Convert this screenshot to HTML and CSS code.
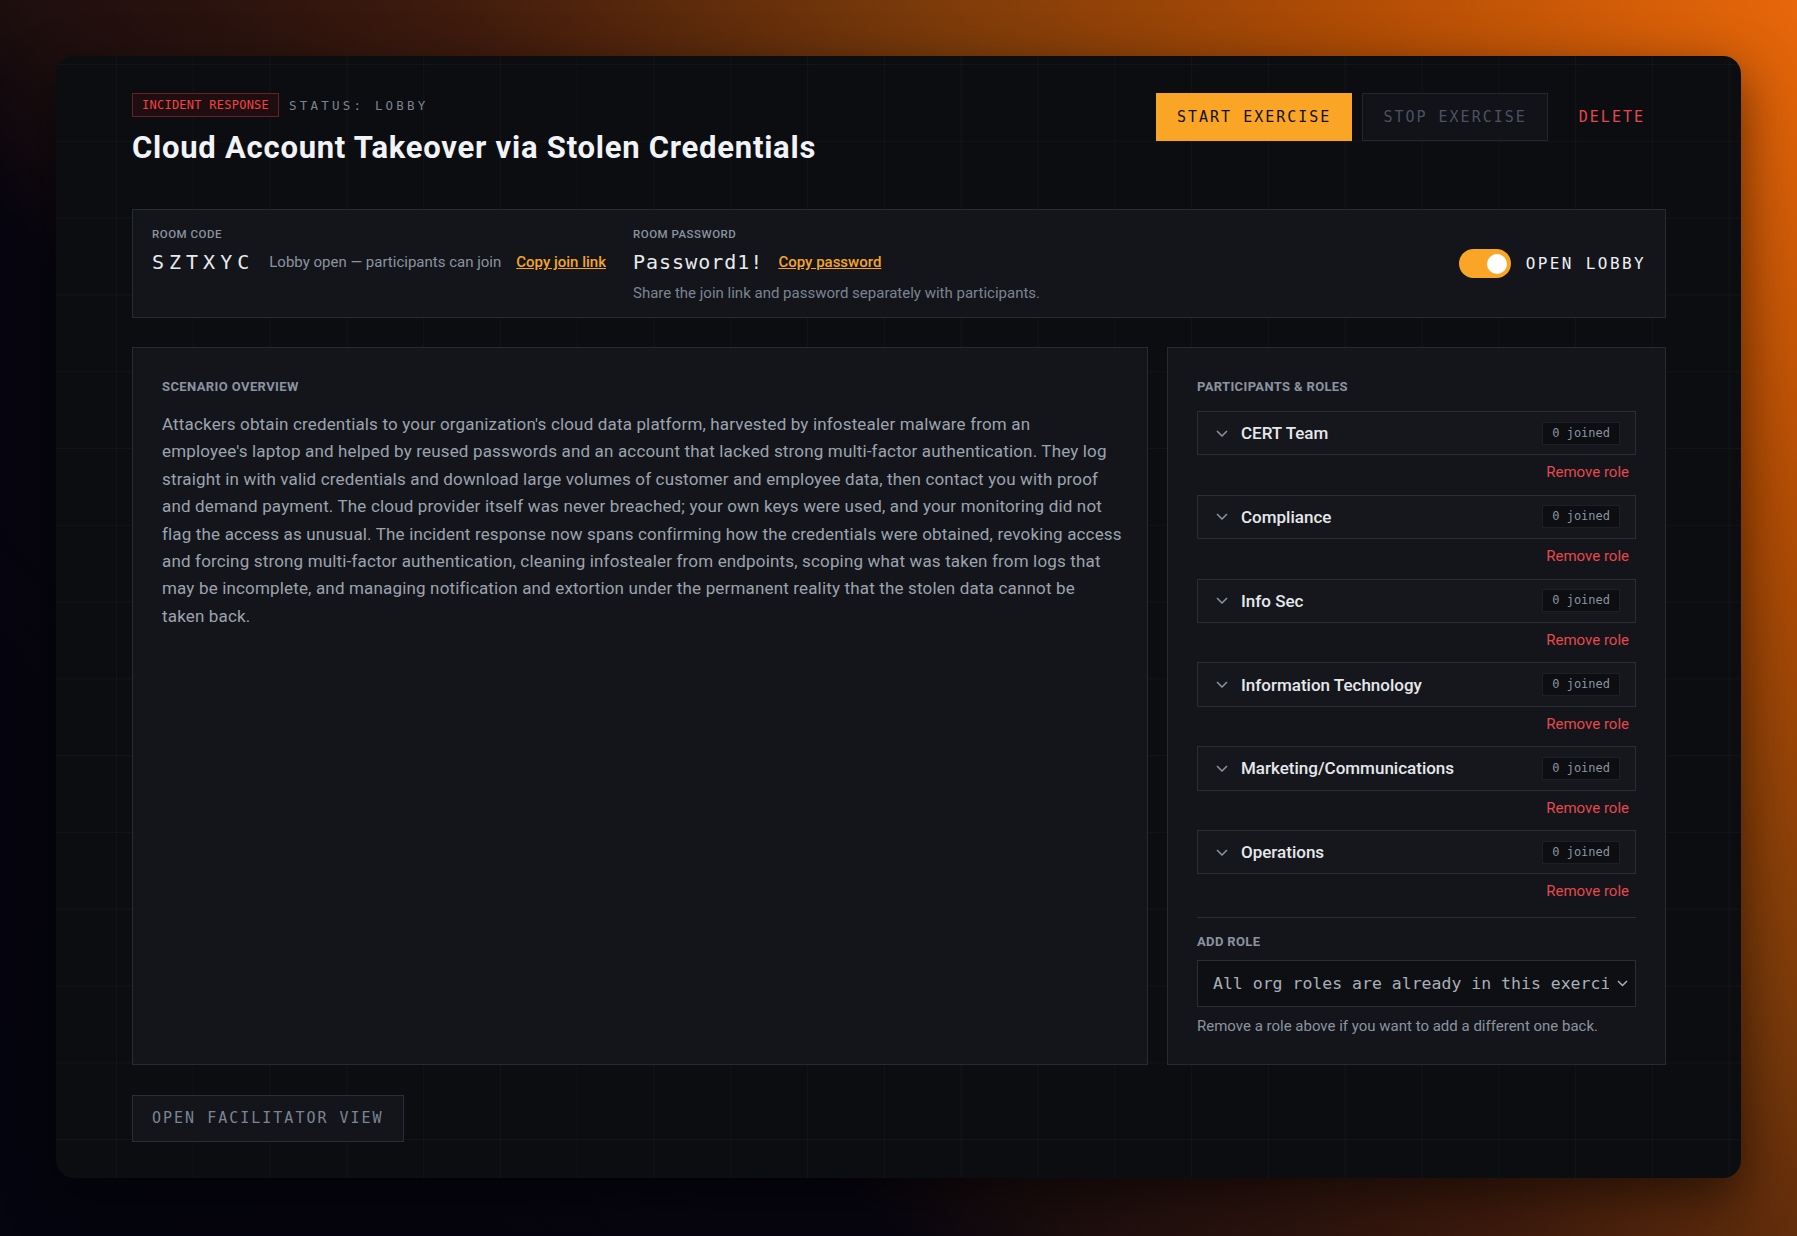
FILE: index.html
```html
<!DOCTYPE html>
<html lang="en">
<head>
    <meta charset="UTF-8">
    <meta name="viewport" content="width=device-width, initial-scale=1.0">
    <title>Exercise Lobby</title>
    <link rel="stylesheet" href="styles.css">
</head>
<body>
    <div class="shell">
        <header class="top">
            <div class="top-left">
                <div class="meta">
                    <span class="tag">INCIDENT RESPONSE</span>
                    <span class="status">STATUS: LOBBY</span>
                </div>
                <h1>Cloud Account Takeover via Stolen Credentials</h1>
            </div>
            <div class="actions">
                <button class="btn btn-start">START EXERCISE</button>
                <button class="btn btn-stop">STOP EXERCISE</button>
                <button class="btn btn-delete">DELETE</button>
            </div>
        </header>

        <section class="room">
            <div class="room-group">
                <div class="label">Room code</div>
                <div class="room-row">
                    <span class="code">SZTXYC</span>
                    <span class="note">Lobby open — participants can join</span>
                    <a class="copy" href="#">Copy join link</a>
                </div>
            </div>
            <div class="room-group">
                <div class="label">Room password</div>
                <div class="room-row">
                    <span class="password">Password1!</span>
                    <a class="copy" href="#">Copy password</a>
                </div>
                <div class="share">Share the join link and password separately with participants.</div>
            </div>
            <div class="lobby-toggle">
                <span class="switch"><span class="knob"></span></span>
                <span class="switch-text">OPEN LOBBY</span>
            </div>
        </section>

        <div class="main">
            <section class="panel scenario">
                <h2 class="section-title">Scenario overview</h2>
                <p>Attackers obtain credentials to your organization's cloud data platform, harvested by infostealer malware from an<br>
                employee's laptop and helped by reused passwords and an account that lacked strong multi-factor authentication. They log<br>
                straight in with valid credentials and download large volumes of customer and employee data, then contact you with proof<br>
                and demand payment. The cloud provider itself was never breached; your own keys were used, and your monitoring did not<br>
                flag the access as unusual. The incident response now spans confirming how the credentials were obtained, revoking access<br>
                and forcing strong multi-factor authentication, cleaning infostealer from endpoints, scoping what was taken from logs that<br>
                may be incomplete, and managing notification and extortion under the permanent reality that the stolen data cannot be<br>
                taken back.</p>
            </section>

            <aside class="panel roles">
                <h2 class="section-title">Participants &amp; roles</h2>
                <div class="role-list">
                    <div class="role">
                        <div class="role-box">
                            <svg class="chev" width="12" height="7" viewBox="0 0 12 7"><polyline points="1,1 6,6 11,1" fill="none" stroke="#8b93a1" stroke-width="1.5"/></svg>
                            <span class="role-name">CERT Team</span>
                            <span class="joined">0 joined</span>
                        </div>
                        <a class="remove" href="#">Remove role</a>
                    </div>
                    <div class="role">
                        <div class="role-box">
                            <svg class="chev" width="12" height="7" viewBox="0 0 12 7"><polyline points="1,1 6,6 11,1" fill="none" stroke="#8b93a1" stroke-width="1.5"/></svg>
                            <span class="role-name">Compliance</span>
                            <span class="joined">0 joined</span>
                        </div>
                        <a class="remove" href="#">Remove role</a>
                    </div>
                    <div class="role">
                        <div class="role-box">
                            <svg class="chev" width="12" height="7" viewBox="0 0 12 7"><polyline points="1,1 6,6 11,1" fill="none" stroke="#8b93a1" stroke-width="1.5"/></svg>
                            <span class="role-name">Info Sec</span>
                            <span class="joined">0 joined</span>
                        </div>
                        <a class="remove" href="#">Remove role</a>
                    </div>
                    <div class="role">
                        <div class="role-box">
                            <svg class="chev" width="12" height="7" viewBox="0 0 12 7"><polyline points="1,1 6,6 11,1" fill="none" stroke="#8b93a1" stroke-width="1.5"/></svg>
                            <span class="role-name">Information Technology</span>
                            <span class="joined">0 joined</span>
                        </div>
                        <a class="remove" href="#">Remove role</a>
                    </div>
                    <div class="role">
                        <div class="role-box">
                            <svg class="chev" width="12" height="7" viewBox="0 0 12 7"><polyline points="1,1 6,6 11,1" fill="none" stroke="#8b93a1" stroke-width="1.5"/></svg>
                            <span class="role-name">Marketing/Communications</span>
                            <span class="joined">0 joined</span>
                        </div>
                        <a class="remove" href="#">Remove role</a>
                    </div>
                    <div class="role">
                        <div class="role-box">
                            <svg class="chev" width="12" height="7" viewBox="0 0 12 7"><polyline points="1,1 6,6 11,1" fill="none" stroke="#8b93a1" stroke-width="1.5"/></svg>
                            <span class="role-name">Operations</span>
                            <span class="joined">0 joined</span>
                        </div>
                        <a class="remove" href="#">Remove role</a>
                    </div>
                </div>

                <div class="add-role">
                    <div class="section-title">Add role</div>
                    <div class="select">
                        <span class="select-text">All org roles are already in this exercise</span>
                        <svg class="select-chev" width="11" height="7" viewBox="0 0 11 7"><polyline points="1,1 5.5,5.5 10,1" fill="none" stroke="#aab0ba" stroke-width="1.5"/></svg>
                    </div>
                    <div class="hint">Remove a role above if you want to add a different one back.</div>
                </div>
            </aside>
        </div>

        <button class="btn btn-facil">OPEN FACILITATOR VIEW</button>
    </div>
</body>
</html>
```

FILE: styles.css
```css
* {
    box-sizing: border-box;
}
body {
    margin: 0;
    min-height: 100vh;
    padding: 56px;
    font-family: Roboto, "Liberation Sans", sans-serif;
    color: #e6e8ec;
    background: linear-gradient(49deg, #05050f 0%, #07050f 31%, #1d0e0e 37.5%, #2b130e 45%, #3f1b0d 53%, #7a3a0a 69%, #b04c05 84%, #e8670a 100%);
}
.shell {
    padding: 37px 75px 36px 76px;
    border-radius: 18px;
    background-color: #0b0d11;
    background-image:
        linear-gradient(rgba(255, 255, 255, 0.028) 1px, transparent 1px),
        linear-gradient(90deg, rgba(255, 255, 255, 0.028) 1px, transparent 1px);
    background-size: 76.8px 76.8px;
    background-position: 60px 8px;
    box-shadow: 0 18px 50px rgba(0, 0, 0, 0.55);
}

/* header */
.top {
    display: flex;
    justify-content: space-between;
    align-items: flex-start;
}
.meta {
    display: flex;
    align-items: center;
    gap: 10px;
    height: 24px;
}
.tag {
    font-family: "DejaVu Sans Mono", monospace;
    font-size: 12px;
    letter-spacing: 0.25px;
    line-height: 22px;
    padding: 0 9px;
    color: #ef4444;
    background: #1f0e11;
    border: 1px solid #6a1f22;
}
.status {
    font-family: "DejaVu Sans Mono", monospace;
    font-size: 12.5px;
    letter-spacing: 3.2px;
    color: #7c8493;
}
h1 {
    margin: 12px 0 0;
    font-size: 31px;
    line-height: 37px;
    font-weight: 700;
    letter-spacing: 0.75px;
    color: #f1f3f6;
}
.actions {
    display: flex;
    gap: 10px;
}
.btn {
    font-family: "DejaVu Sans Mono", monospace;
    font-size: 15px;
    letter-spacing: 2px;
    line-height: 46px;
    padding: 0 20px;
    border: 1px solid transparent;
    background: none;
    cursor: pointer;
}
.btn-start {
    background: #fba526;
    border-color: #fba526;
    color: #111111;
}
.btn-stop {
    background: #111318;
    border-color: #23262d;
    color: #4b5260;
}
.btn-delete {
    color: #e5484d;
}
.btn-facil {
    margin-top: 30px;
    line-height: 45px;
    padding: 0 19px;
    background: #13151a;
    border-color: #2a2d34;
    color: #7c8493;
}

/* room info */
.room {
    display: flex;
    align-items: flex-start;
    gap: 27px;
    margin-top: 43px;
    padding: 16px 19px 14px 19px;
    background: #13151a;
    border: 1px solid #262a31;
}
.label {
    font-size: 11.5px;
    line-height: 16px;
    font-weight: 500;
    letter-spacing: 0.5px;
    text-transform: uppercase;
    color: #8b93a1;
}
.room-row {
    display: flex;
    align-items: center;
    gap: 15px;
    margin-top: 6px;
    height: 28px;
}
.code {
    font-family: "DejaVu Sans Mono", monospace;
    font-size: 20px;
    line-height: 28px;
    letter-spacing: 5px;
    color: #e8eaee;
}
.password {
    font-family: "DejaVu Sans Mono", monospace;
    font-size: 20px;
    line-height: 28px;
    letter-spacing: 1px;
    color: #e8eaee;
}
.note {
    font-size: 15px;
    color: #8b93a1;
}
.copy {
    font-size: 15px;
    font-weight: 500;
    color: #f5a524;
}
.share {
    margin-top: 7px;
    font-size: 15px;
    line-height: 20px;
    color: #7c8493;
}
.lobby-toggle {
    display: flex;
    align-items: center;
    gap: 15px;
    margin-left: auto;
    margin-top: 23px;
}
.switch {
    display: flex;
    align-items: center;
    justify-content: flex-end;
    width: 52px;
    height: 29px;
    padding: 0 4px;
    border-radius: 15px;
    background: #fba526;
}
.knob {
    width: 20px;
    height: 20px;
    border-radius: 50%;
    background: #ffffff;
}
.switch-text {
    font-family: "DejaVu Sans Mono", monospace;
    font-size: 16px;
    letter-spacing: 2.4px;
    color: #eef0f4;
}

/* panels */
.main {
    display: grid;
    grid-template-columns: minmax(0, 1fr) 499px;
    gap: 19px;
    margin-top: 29px;
}
.panel {
    background: #13151a;
    border: 1px solid #262a31;
    padding: 30px 29px 28px;
}
.section-title {
    margin: 0;
    font-size: 13px;
    line-height: 18px;
    font-weight: 700;
    letter-spacing: 0.35px;
    text-transform: uppercase;
    color: #8b93a1;
}
.scenario .section-title {
    letter-spacing: 0.4px;
}
.scenario p {
    margin: 15px 0 0;
    white-space: nowrap;
    font-size: 17px;
    line-height: 27.4px;
    letter-spacing: 0.16px;
    color: #9ca3af;
}
.role-list {
    display: flex;
    flex-direction: column;
    gap: 11.4px;
    margin-top: 15px;
}
.role {
    display: flex;
    flex-direction: column;
}
.role-box {
    display: flex;
    align-items: center;
    height: 44.4px;
    padding: 0 15px 0 18px;
    background: #15171c;
    border: 1px solid #2a2d34;
}
.chev {
    flex: none;
}
.role-name {
    margin-left: 13px;
    font-size: 17px;
    font-weight: 500;
    color: #e6e8ec;
}
.joined {
    margin-left: auto;
    font-family: "DejaVu Sans Mono", monospace;
    font-size: 12px;
    line-height: 21px;
    padding: 0 9px;
    background: #0c0e12;
    border: 1px solid #1c1f25;
    color: #8b93a1;
}
.remove {
    align-self: flex-end;
    margin-top: 6px;
    padding-right: 7px;
    font-size: 15px;
    line-height: 22px;
    color: #e5484d;
    text-decoration: none;
}
.add-role {
    margin-top: 14.5px;
    padding-top: 15px;
    border-top: 1px solid #2a2d34;
}
.select {
    display: flex;
    align-items: center;
    height: 47px;
    margin-top: 9px;
    padding: 0 7px 0 15px;
    background: #0d0f13;
    border: 1px solid #2a2d34;
}
.select-text {
    flex: 1;
    overflow: hidden;
    white-space: nowrap;
    font-family: "DejaVu Sans Mono", monospace;
    font-size: 16.5px;
    color: #aab0ba;
}
.select-chev {
    flex: none;
    margin-left: 8px;
}
.hint {
    margin-top: 9px;
    font-size: 15px;
    line-height: 20px;
    color: #8b93a1;
}
```
